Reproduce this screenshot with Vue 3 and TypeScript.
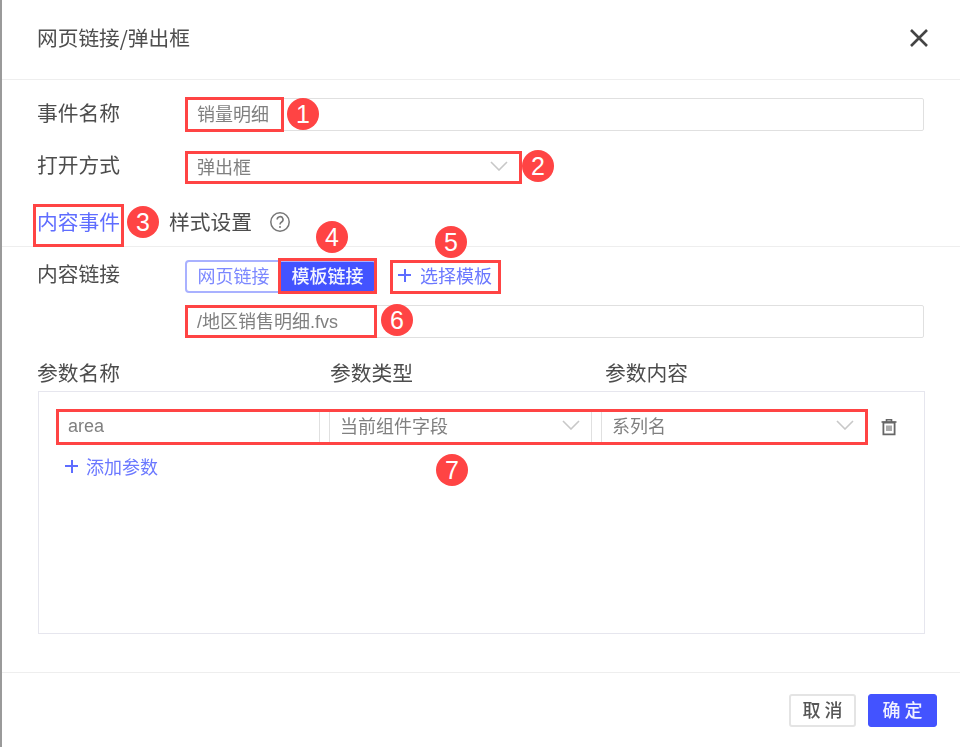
<script setup lang="ts">
const marks = [
  { n: 1, x: 303, y: 114 },
  { n: 2, x: 538, y: 166 },
  { n: 3, x: 143, y: 222 },
  { n: 4, x: 332, y: 237 },
  { n: 5, x: 451, y: 242 },
  { n: 6, x: 397, y: 320 },
  { n: 7, x: 452, y: 470 },
]
const boxes = [
  { x: 185, y: 97, w: 99, h: 35 },
  { x: 185, y: 151, w: 337, h: 33 },
  { x: 33, y: 204, w: 91, h: 43 },
  { x: 278, y: 258, w: 99, h: 36 },
  { x: 390, y: 260, w: 111, h: 34 },
  { x: 185, y: 305, w: 192, h: 33 },
  { x: 56, y: 409, w: 812, h: 36 },
]
const pos = (m: { x: number; y: number }) => ({ left: m.x - 16 + 'px', top: m.y - 16 + 'px' })
const boxStyle = (b: { x: number; y: number; w: number; h: number }) => ({
  left: b.x + 'px',
  top: b.y + 'px',
  width: b.w + 'px',
  height: b.h + 'px',
})
</script>

<template>
  <div class="dialog">
    <div class="content">
      <header class="head">
        <span class="title">网页链接/弹出框</span>
        <svg class="close" width="20" height="20" viewBox="0 0 20 20">
          <path d="M2 2 L18 18 M18 2 L2 18" stroke="#444" stroke-width="2.6" fill="none" />
        </svg>
      </header>

      <div class="body">
        <div class="row r1">
          <label class="lab">事件名称</label>
          <div class="field wide"><span>销量明细</span></div>
        </div>
        <div class="row r2">
          <label class="lab">打开方式</label>
          <div class="field sel">
            <span>弹出框</span>
            <svg class="chev" width="18" height="10" viewBox="0 0 18 10"><path d="M1 1 L9 9 L17 1" /></svg>
          </div>
        </div>
      </div>

      <nav class="tabs">
        <span class="tab on">内容事件</span>
        <span class="tab second">样式设置</span>
        <svg class="help" width="22" height="22" viewBox="0 0 22 22">
          <circle cx="11" cy="11" r="9.2" fill="none" stroke="#777" stroke-width="1.5" />
          <path d="M8.2 8.6 a2.9 2.9 0 1 1 4.4 2.4 c-1.1.7-1.6 1.2-1.6 2.4" fill="none" stroke="#777" stroke-width="1.6" />
          <circle cx="11" cy="16" r="1" fill="#777" />
        </svg>
      </nav>

      <div class="row r3">
        <label class="lab">内容链接</label>
        <div class="seg">
          <span class="seg-a">网页链接</span>
          <span class="seg-b">模板链接</span>
        </div>
        <span class="pick"><i class="plus"></i>选择模板</span>
      </div>
      <div class="field wide path"><span>/地区销售明细.fvs</span></div>

      <div class="heads">
        <span>参数名称</span>
        <span>参数类型</span>
        <span>参数内容</span>
      </div>

      <section class="params">
        <div class="prow">
          <div class="cell c1"><span class="latin">area</span></div>
          <div class="cell c2">
            <span>当前组件字段</span>
            <svg class="chev" width="18" height="10" viewBox="0 0 18 10"><path d="M1 1 L9 9 L17 1" /></svg>
          </div>
          <div class="cell c3">
            <span>系列名</span>
            <svg class="chev" width="18" height="10" viewBox="0 0 18 10"><path d="M1 1 L9 9 L17 1" /></svg>
          </div>
          <svg class="trash" width="18" height="18" viewBox="0 0 18 18">
            <path d="M1.5 4 H16.5 M6.5 4 V1.8 H11.5 V4" fill="none" stroke="#666" stroke-width="1.6" />
            <path d="M3.4 4.5 H14.6 V16.4 H3.4 Z" fill="none" stroke="#666" stroke-width="1.8" />
            <path d="M7 7.5 V13 M9 7.5 V13 M11 7.5 V13" stroke="#666" stroke-width="1.1" />
          </svg>
        </div>
        <span class="add"><i class="plus small"></i>添加参数</span>
      </section>

      <footer class="foot">
        <button class="btn cancel">取 消</button>
        <button class="btn ok">确 定</button>
      </footer>
    </div>

    <div v-for="(b, i) in boxes" :key="'b' + i" class="redbox" :style="boxStyle(b)"></div>
    <div v-for="m in marks" :key="m.n" class="badge" :style="pos(m)">{{ m.n }}</div>
  </div>
</template>

<style>
html, body { margin: 0; background: #fff; }
</style>

<style scoped>
.dialog {
  position: relative;
  width: 960px;
  height: 747px;
  box-sizing: border-box;
  border-left: 2px solid #9a9a9a;
  background: #fff;
  overflow: hidden;
  font-family: "Noto Sans CJK SC", "Liberation Sans", sans-serif;
  color: #555;
  font-size: 18px;
}
.content { filter: blur(0.5px); height: 747px; }
.head {
  height: 80px;
  box-sizing: border-box;
  border-bottom: 1px solid #eeeeee;
  display: flex;
  align-items: center;
  justify-content: space-between;
  padding: 0 31px 5px 35px;
}
.title { font-size: 20.7px; color: #4d4d4d; line-height: 28px; margin-bottom: 1px; }
.close { display: block; margin-top: 1px; }
.body { padding-left: 35px; }
.row { display: flex; align-items: flex-start; }
.lab { width: 148px; flex: none; font-size: 20.75px; color: #4d4d4d; line-height: 28px; }
.r1 { margin-top: 18px; }
.r2 { margin-top: 20px; }
.r2 .lab { margin-top: -1px; }
.field {
  box-sizing: border-box;
  height: 33px;
  border: 1px solid #e0e0e0;
  border-radius: 2px;
  display: flex;
  align-items: center;
  justify-content: space-between;
  padding: 0 12px 3px 11px;
  color: #808080;
  font-size: 18px;
}
.wide { width: 739px; }
.sel { width: 336px; }
.chev { display: block; flex: none; }
.chev path { fill: none; stroke: #c8c8c8; stroke-width: 1.6; }
.tabs {
  margin-top: 18px;
  height: 45px;
  box-sizing: border-box;
  border-bottom: 1px solid #eeeeee;
  display: flex;
  align-items: flex-start;
  padding: 5px 0 0 35px;
}
.tab { font-size: 20.75px; line-height: 28px; color: #4d4d4d; }
.tab.on { color: #5f6dff; }
.second { margin-left: 49px; }
.help { margin: 4px 0 0 17px; }
.r3 { padding-left: 35px; margin-top: 13px; }
.r3 .lab { margin-top: -1px; }
.seg {
  display: flex;
  width: 192px;
  height: 33px;
  box-sizing: border-box;
  border: 2px solid #a9b1ff;
  border-radius: 4px;
  overflow: hidden;
  font-size: 18px;
  line-height: 26px;
  text-align: center;
}
.seg-a { width: 93px; color: #7c88ff; }
.seg-b { flex: 1; color: #f4f5ff; background: #4353ff; font-weight: 500; }
.pick {
  margin-left: 15px;
  display: flex;
  align-items: center;
  height: 33px;
  padding-bottom: 3px;
  box-sizing: border-box;
  color: #6b78ff;
  font-size: 18px;
  position: relative;
}
.plus {
  position: relative;
  display: inline-block;
  width: 13px;
  height: 13px;
  margin: 0 9px 0 6px;
}
.plus::before,
.plus::after { content: ""; position: absolute; background: #5f6dff; }
.plus::before { left: 0; right: 0; top: 5.5px; height: 2px; }
.plus::after { top: 0; bottom: 0; left: 5.5px; width: 2px; }
.path { margin: 12px 0 0 183px; font-family: "Liberation Sans", "Noto Sans CJK SC", sans-serif; }
.heads {
  display: grid;
  grid-template-columns: 293px 275px 1fr;
  padding-left: 35px;
  height: 28px;
  margin-top: 20px;
  font-size: 20.75px;
  line-height: 28px;
  color: #4d4d4d;
}
.params {
  margin: 5px 0 0 36px;
  width: 887px;
  height: 243px;
  box-sizing: border-box;
  border: 1px solid #e6e6ee;
  padding: 17px 0 0 18px;
}
.prow { display: flex; align-items: center; height: 34px; }
.cell {
  box-sizing: border-box;
  height: 33px;
  border: 1px solid #e0e0e0;
  display: flex;
  align-items: center;
  justify-content: space-between;
  padding: 0 11px 3px 10px;
  color: #808080;
  font-size: 18px;
}
.latin { font-family: "Liberation Sans", sans-serif; font-size: 18px; }
.c1 { width: 263px; padding-bottom: 0; }
.c2 { width: 263px; margin-left: 9px; }
.c3 { width: 265px; margin-left: 9px; }
.trash { margin-left: 14px; margin-top: 1px; }
.add {
  display: inline-flex;
  align-items: center;
  margin: 7px 0 0 8px;
  color: #6b78ff;
  font-size: 18px;
  line-height: 32px;
}
.plus.small { margin: 0 8px 0 0; }
.foot {
  margin-top: 38px;
  border-top: 1px solid #eeeeee;
  height: 75px;
  box-sizing: border-box;
  padding: 21px 23px 0 0;
  display: flex;
  justify-content: flex-end;
  gap: 12px;
}
.btn {
  box-sizing: border-box;
  height: 33px;
  border-radius: 3px;
  font-family: inherit;
  font-size: 18px;
  font-weight: 500;
  padding: 0 0 3px;
  cursor: pointer;
}
.cancel { width: 67px; background: #fff; border: 2px solid #e4e4e4; color: #555; }
.ok { width: 69px; background: #4353ff; border: 1px solid #4353ff; color: #f0f1ff; }
.redbox {
  position: absolute;
  box-sizing: border-box;
  border: 3px solid #ff4444;
  margin-left: -2px;
  pointer-events: none;
}
.badge {
  position: absolute;
  margin-left: -2px;
  width: 32px;
  height: 32px;
  border-radius: 50%;
  background: #ff4444;
  color: #fff;
  font-family: "Liberation Sans", sans-serif;
  font-size: 25px;
  line-height: 32px;
  text-align: center;
}
</style>
